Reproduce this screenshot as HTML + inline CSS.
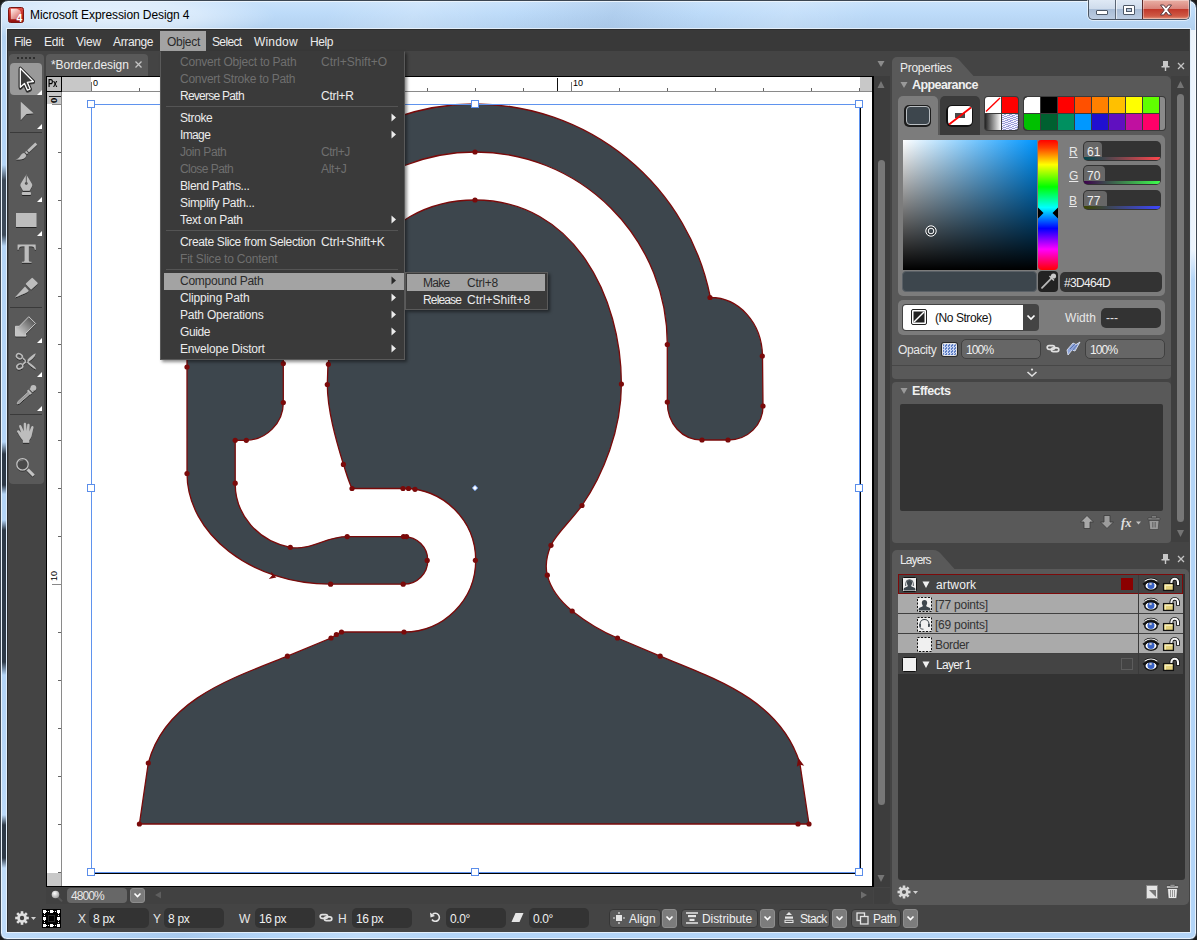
<!DOCTYPE html>
<html><head><meta charset="utf-8">
<style>
*{box-sizing:border-box;margin:0;padding:0}
html,body{width:1197px;height:940px;overflow:hidden;background:#1c1c1c}
body{font-family:"Liberation Sans",sans-serif;font-size:12px;color:#e6e6e6;position:relative}
.a{position:absolute}
.t{position:absolute;white-space:pre;line-height:14px}
#frame{left:0;top:0;width:1197px;height:940px;border-radius:8px 8px 7px 7px;background:radial-gradient(ellipse 170px 26px at 105px 15px,rgba(255,255,255,.62) 0,rgba(255,255,255,.42) 55%,rgba(255,255,255,0) 100%),linear-gradient(115deg,rgba(255,255,255,0) 300px,rgba(255,255,255,.18) 380px,rgba(255,255,255,0) 470px,rgba(120,150,190,.18) 560px,rgba(255,255,255,0) 640px,rgba(255,255,255,.15) 720px,rgba(255,255,255,0) 800px),linear-gradient(180deg,#c9e2fb 0,#bddbf9 12px,#b3d1ef 29px,#b5d5f6 60px,#b3d5f8 100%);border:1px solid #3c4652;box-shadow:inset 0 0 0 1px #eaf3fc}
#client{left:7px;top:29px;width:1183px;height:903px;background:#444444;border:1px solid #2c2c2c;border-right-color:#444;border-bottom-color:#444;box-shadow:0 0 0 1px rgba(255,255,255,.6)}
#menubar{left:8px;top:30px;width:1181px;height:21px;background:#393939}
.mi{position:absolute;top:35px;line-height:14px;color:#ececec}
</style></head><body>
<div class="a" id="frame"></div>
<div class="a" style="left:2px;top:30px;width:4px;height:900px;background:linear-gradient(180deg,rgba(40,50,62,0) 135px,rgba(40,50,62,.85) 150px,rgba(40,50,62,.85) 205px,rgba(40,50,62,0) 216px,rgba(40,50,62,0) 412px,rgba(30,40,52,.9) 424px,rgba(30,40,52,.9) 455px,rgba(40,50,62,0) 464px,rgba(40,50,62,0) 490px,rgba(30,40,52,.9) 500px,rgba(30,40,52,.9) 632px,rgba(40,50,62,0) 645px,rgba(40,50,62,0) 785px,rgba(30,40,52,.9) 795px,rgba(30,40,52,.9) 828px,rgba(40,50,62,0) 838px)"></div>
<div class="a" style="left:1191px;top:30px;width:5px;height:250px;background:linear-gradient(180deg,rgba(255,255,255,.75) 0,rgba(255,255,255,.75) 220px,rgba(255,255,255,0) 250px)"></div>
<div class="a" id="client"></div>
<div class="a" id="menubar"></div>

<!-- title -->
<svg class="a" style="left:8px;top:7px" width="16" height="16" viewBox="0 0 16 16">
<defs><linearGradient id="ig" x1="0" y1="0" x2="0" y2="1"><stop offset="0" stop-color="#e0544a"/><stop offset="0.45" stop-color="#c42a22"/><stop offset="1" stop-color="#8f0f0c"/></linearGradient></defs>
<rect x="0.5" y="0.5" width="15" height="15" rx="2" fill="url(#ig)" stroke="#7a1512"/>
<defs><linearGradient id="dg" x1="0" y1="0" x2="1" y2="1"><stop offset="0" stop-color="#fff" stop-opacity=".95"/><stop offset="1" stop-color="#f6b0a8" stop-opacity=".45"/></linearGradient></defs>
<path d="M2.800 1.800h4.700c3.600 0 5.700 2.300 5.700 5.200s-2.100 5.200-5.700 5.200h-4.700z" fill="url(#dg)"/>
<text x="8.600" y="15.300" font-family="Liberation Sans" font-weight="bold" font-size="10.500" fill="#fff">4</text>
</svg>
<div class="t" style="left:30px;top:7px;font-size:12px;color:#000;line-height:16px;letter-spacing:-0.09px">Microsoft Expression Design 4</div>
<!-- window buttons -->
<div class="a" style="left:1088px;top:0;width:102px;height:20px;border:1px solid #4a5563;border-top:none;border-radius:0 0 5px 5px;background:linear-gradient(180deg,#dfe9f5 0,#cfdcec 45%,#a9bdd6 50%,#bccde2 100%);box-shadow:0 0 0 1px rgba(255,255,255,.55)"></div>
<div class="a" style="left:1115px;top:0;width:1px;height:19px;background:#5a6675"></div>
<div class="a" style="left:1116px;top:0;width:1px;height:19px;background:rgba(255,255,255,.6)"></div>
<div class="a" style="left:1142px;top:0;width:47px;height:19px;border-radius:0 0 4px 0;background:linear-gradient(180deg,#e9b0a5 0,#d9837a 45%,#c1392b 50%,#cf5a45 85%,#e39880 100%);border-left:1px solid #5a2a2a;box-shadow:inset 0 0 0 1px rgba(255,255,255,.35)"></div>
<div class="a" style="left:1096px;top:10px;width:12px;height:5px;background:#fff;border:1px solid #4d5866;border-radius:1px"></div>
<div class="a" style="left:1123px;top:5px;width:12px;height:10px;background:#fff;border:1px solid #4d5866;border-radius:1px"></div>
<div class="a" style="left:1126px;top:8px;width:6px;height:4px;background:#b9c9dd;border:1px solid #4d5866"></div>
<svg class="a" style="left:1159px;top:4px" width="14" height="12" viewBox="0 0 14 12"><path d="M1.500 1h3.200l2.300 2.800 2.300-2.800h3.200l-3.800 5 3.800 5h-3.200l-2.300-2.900-2.300 2.900h-3.200l3.800-5z" fill="#fff" stroke="#5a3a40" stroke-width="1"/></svg>

<div class="a" style="left:160px;top:31px;width:46px;height:20px;background:#a3a3a3"></div>
<div class="mi" style="left:14px;color:#ececec;letter-spacing:-0.46px">File</div>
<div class="mi" style="left:44px;color:#ececec;letter-spacing:-0.17px">Edit</div>
<div class="mi" style="left:76px;color:#ececec;letter-spacing:-0.20px">View</div>
<div class="mi" style="left:113px;color:#ececec;letter-spacing:-0.37px">Arrange</div>
<div class="mi" style="left:167px;color:#2a2a2a;letter-spacing:-0.28px">Object</div>
<div class="mi" style="left:212px;color:#ececec;letter-spacing:-0.63px">Select</div>
<div class="mi" style="left:254px;color:#ececec;letter-spacing:0.19px">Window</div>
<div class="mi" style="left:310px;color:#ececec;letter-spacing:-0.42px">Help</div>


<!-- toolbox -->
<div class="a" style="left:9px;top:54px;width:35px;height:430px;background:#595959;border-radius:4px"></div>
<div class="a" style="left:17px;top:57px;width:18px;height:2px;background:repeating-linear-gradient(90deg,#2e2e2e 0,#2e2e2e 2px,transparent 2px,transparent 4px)"></div>
<div class="a" style="left:10px;top:63px;width:32px;height:32px;background:#999999;border-radius:4px"></div>
<div class="a" style="left:10px;top:132px;width:32px;height:1px;background:#3a3a3a"></div>
<div class="a" style="left:10px;top:307px;width:32px;height:1px;background:#3a3a3a"></div>
<div class="a" style="left:10px;top:414px;width:32px;height:1px;background:#3a3a3a"></div>
<svg class="a" style="left:9px;top:54px" width="35" height="430" viewBox="9 54 35 430">
<defs>
<filter id="ds" x="-20%" y="-20%" width="150%" height="150%"><feDropShadow dx="0" dy="1" stdDeviation="0.600" flood-color="#000" flood-opacity=".6"/></filter>
<linearGradient id="bk" x1="1" y1="0" x2="0" y2="1"><stop offset="0" stop-color="#3c3c3c"/><stop offset="0.800" stop-color="#c4c4c4"/></linearGradient>
</defs>
<g fill="#fff"><path d="M42 90v5h-5z"/><path d="M42 124v5h-5z"/><path d="M42 197v5h-5z"/><path d="M42 231v5h-5z"/><path d="M42 338v5h-5z"/><path d="M42 372v5h-5z"/><path d="M42 406v5h-5z"/></g>
<!-- select arrow -->
<g filter="url(#ds)"><path id="sa" d="M20.300 68.300v19l4.200-3.900 2.900 6.800 2.800-1.200-2.900-6.700 6.100-0.800z" fill="none" stroke="#1e1e1e" stroke-width="3.200" stroke-linejoin="round"/><path d="M20.300 68.300v19l4.200-3.900 2.900 6.800 2.800-1.200-2.900-6.700 6.100-0.800z" fill="#3a3a3a" stroke="#fff" stroke-width="1.300" stroke-linejoin="round"/></g>
<!-- direct select -->
<path d="M20.800 101.800v18.200l5.500-6 7.200-0.700z" fill="#bdbdbd" filter="url(#ds)"/>
<g fill="#bdbdbd" filter="url(#ds)">
<!-- brush -->
<path d="M35.300 142.600l1.900 2-8.200 7.600-1.900-2z"/><path d="M26.300 150.900l1.900 2-1.300 1.200-1.900-2z"/><path d="M24.300 153l1.800 2c0.300 3.300-4.500 5-10.600 4.500 2.500-0.700 3.700-1.700 4.600-3.300 1-1.900 2.300-3.100 4.200-3.200z"/>
<!-- pen -->
<path d="M26.300 174.500l5.600 9.300c0.500 0.900 0.500 1.700 0 2.600l-2.400 4.300h-6.400l-2.400-4.300c-0.500-0.900-0.500-1.700 0-2.600zM25.800 175.300h1v6.600a1.500 1.500 0 1 1-1 0z" fill-rule="evenodd"/><rect x="21.800" y="192" width="9.200" height="3" rx="1.300"/>
<!-- rectangle -->
<rect x="16" y="213" width="20.500" height="14"/>
<!-- T -->
<path d="M17.600 244.500h18l0.200 5.300h-0.900c-0.500-2.600-1.400-3.500-3.600-3.500h-2.500v13.600c0 1.500 0.500 1.800 2.700 1.900v0.900h-9.600v-0.900c2.200-0.100 2.700-0.400 2.700-1.900v-13.600h-2.500c-2.200 0-3.100 0.900-3.600 3.500h-0.900z"/>
<!-- knife -->
<path d="M31.500 278.200a1 1 0 0 1 1.400 0l4.500 4.300a1 1 0 0 1 0 1.400l-5.600 5.200a1 1 0 0 1-1.400 0l-4.300-4.500a1 1 0 0 1 0-1.400z"/><path d="M25 286.600l3.800 4.100-1.300 1.300c-3.800 2-8.200 3.700-12.700 5.500z"/>
<!-- scissors -->
<path d="M26.600 360.900c3-3.600 6-6.300 9-7.600 0 2.500-3 6-7.300 8.600 4.300 2.600 7.500 5.200 7.900 7.600-3.500-1.300-6.600-3.900-9.600-7.500l-3.400 3-1-1 2.900-3-2.900-2.600 1-1.100z"/>
<!-- hand -->
<path d="M22.900 442.800l0-2.500c-1.800-2-3.500-4.700-4.200-6-0.600-1-0.800-1.500-1.400-2.200-0.900-1 0.400-2.500 1.700-1.600l2.200 2-2-5.800c-0.500-1.500 1.400-2.300 2.100-0.900l2.500 5.500-0.100-7.200c0-1.600 2.300-1.700 2.400-0.100l0.500 7 0.700-6.300c0.200-1.500 2.400-1.300 2.300 0.200l-0.200 6.600 1.900-4.700c0.600-1.400 2.500-0.700 2.200 0.700-0.700 3.200-1.200 5.300-1.700 7.500-0.400 1.900-1.400 3.700-2.600 5.300l0 2.500z"/>
</g>
<!-- scissors rings -->
<g fill="none" stroke="#bdbdbd" stroke-width="1.400" filter="url(#ds)"><ellipse cx="19.400" cy="356.200" rx="3.100" ry="2.400" transform="rotate(25 19.400 356.200)"/><ellipse cx="19.800" cy="366.300" rx="3.100" ry="2.400" transform="rotate(-25 19.800 366.300)"/></g>
<circle cx="26.700" cy="361" r="0.900" fill="#444"/>
<!-- bucket arrow -->
<path d="M15.500 326.300h3.800l9.500-9.600 6.800 6.800-10.400 10.400 0.800 2h-10.500z" fill="url(#bk)" stroke="#c9c9c9" stroke-width="1" stroke-linejoin="round" filter="url(#ds)"/>
<!-- eyedropper -->
<g filter="url(#ds)" fill="#bdbdbd"><circle cx="33.400" cy="387.800" r="2.900"/><path d="M30.500 388l3.200 3.200-1 1-3.200-3.200z"/><path d="M28.300 389.600l3.600 3.600-1.300 1.300-3.600-3.600z"/><path d="M28.300 392l1.700 1.700-10.500 9.300-2.300 0.800 0.800-2.300z" fill="#9a9a9a" stroke="#bdbdbd" stroke-width="0.800"/></g>
<!-- zoom -->
<g filter="url(#ds)"><circle cx="22.500" cy="464.300" r="5.700" fill="#484848" stroke="#c4c4c4" stroke-width="1.200"/><path d="M19.300 461.300c1.400-1 2.600-1.300 4-1.300" fill="none" stroke="#8a8a8a" stroke-width="0.900"/><path d="M27.700 469.500l6 6" stroke="#c4c4c4" stroke-width="3" stroke-linecap="butt"/></g>
</svg>


<!-- doc tab -->
<div class="a" style="left:46px;top:54px;width:102px;height:22px;background:#595959;border-radius:4px 4px 0 0"></div>
<div class="t" style="left:51px;top:58px;color:#ececec;letter-spacing:-0.07px">*Border.design</div>
<svg class="a" style="left:134px;top:60px" width="9" height="9" viewBox="0 0 9 9"><path d="M1.500 1.500l6 6M7.500 1.500l-6 6" stroke="#c4c4c4" stroke-width="1.300"/></svg>
<!-- scroll gutters -->
<div class="a" style="left:874px;top:76px;width:16px;height:811px;background:#3d3d3d"></div>
<div class="a" style="left:46px;top:887px;width:827px;height:17px;background:#414141"></div>
<div class="a" style="left:874px;top:888px;width:16px;height:16px;background:#3f3f3f;border-radius:0 0 4px 0"></div>
<div class="a" style="left:878px;top:160px;width:7px;height:645px;background:#777777;border-radius:4px"></div>
<svg class="a" style="left:874px;top:56px" width="16" height="850" viewBox="874 56 16 850">
<path d="M877.500 61h7l-3.500 6z" fill="#8c8c8c"/><path d="M877.500 88h7l-3.500-7z" fill="#757575"/><path d="M877.500 875h7l-3.500 7z" fill="#757575"/>
</svg>
<svg class="a" style="left:150px;top:888px" width="720" height="16" viewBox="150 888 720 16"><path d="M161 891.500v7l-6-3.500z" fill="#5e5e5e"/><path d="M861 891.500v7l6-3.500z" fill="#6e6e6e"/></svg>
<!-- doc frame -->
<div class="a" style="left:46px;top:76px;width:828px;height:811px;background:#000"></div>
<div class="a" style="left:47px;top:77px;width:825px;height:809px;background:#fff"></div>
<!-- rulers -->
<div class="a" style="left:47px;top:77px;width:825px;height:15px;background:#fff;border-bottom:1px solid #8a8a8a"></div>
<div class="a" style="left:47px;top:77px;width:15px;height:809px;background:#fff;border-right:1px solid #8a8a8a"></div>
<div class="a" style="left:62px;top:77px;width:29px;height:14px;background:#c8c8c8"></div>
<div class="a" style="left:860px;top:77px;width:12px;height:14px;background:#c8c8c8"></div>
<div class="a" style="left:47px;top:92px;width:14px;height:12px;background:#c8c8c8"></div>
<div class="a" style="left:47px;top:873px;width:14px;height:13px;background:#c8c8c8"></div>
<div class="a" style="left:47px;top:77px;width:15px;height:15px;background:#bcbcbc;border-right:1px solid #000;border-bottom:1px solid #000"></div>
<div class="t" style="left:48px;top:78px;font-size:10px;font-weight:bold;color:#000;line-height:12px;letter-spacing:-0.3px;transform:scaleX(.78);transform-origin:0 0">Px</div>
<svg class="a" style="left:47px;top:77px" width="825" height="809" viewBox="47 77 825 809" shape-rendering="crispEdges">
<g stroke-width="1">
<path d="M91.500 82v9M571.500 82v9" stroke="#777"/><path d="M557.500 78v13" stroke="#111"/>
<path d="M139.500 88v3M187.500 88v3M235.500 88v3M283.500 88v3M331.500 88v3M379.500 88v3M427.500 88v3M475.500 88v3M523.500 88v3M619.500 88v3M667.500 88v3M715.500 88v3M763.500 88v3M811.500 88v3M859.500 88v3" stroke="#666"/>
<path d="M49 96.500h12" stroke="#222"/><path d="M52 104.500h9M52 584.500h9" stroke="#888"/>
<path d="M58 152.500h3M58 200.500h3M58 248.500h3M58 296.500h3M58 344.500h3M58 392.500h3M58 440.500h3M58 488.500h3M58 536.500h3M58 632.500h3M58 680.500h3M58 728.500h3M58 776.500h3M58 824.500h3M58 872.500h3" stroke="#666"/>
</g></svg>
<div class="t" style="left:93px;top:78px;font-size:9px;color:#000;line-height:11px">0</div>
<div class="t" style="left:573px;top:78px;font-size:9px;color:#000;line-height:11px">10</div>
<div class="t" style="left:48px;top:103px;font-size:9.500px;font-weight:bold;color:#000;line-height:11px;transform:rotate(-90deg);transform-origin:0 0">0</div>
<div class="t" style="left:49px;top:581px;font-size:9px;color:#000;line-height:11px;transform:rotate(-90deg);transform-origin:0 0">10</div>
<!-- zoom field -->
<svg class="a" style="left:50px;top:889px" width="14" height="14" viewBox="0 0 14 14"><defs><radialGradient id="zg" cx=".4" cy=".35" r=".7"><stop offset="0" stop-color="#fff"/><stop offset="1" stop-color="#9a9a9a"/></radialGradient></defs><path d="M7.500 8l4 3.800" stroke="#555" stroke-width="2" stroke-linecap="round"/><circle cx="5.500" cy="5.500" r="3.800" fill="url(#zg)"/></svg>
<div class="a" style="left:67px;top:888px;width:60px;height:15px;background:#676767;border-radius:4px"></div>
<div class="t" style="left:71px;top:889px;color:#e8e8e8;line-height:14px;letter-spacing:-0.90px">4800%</div>
<div class="a" style="left:130px;top:888px;width:15px;height:15px;background:#7a7a7a;border-radius:3px;border:1px solid #8d8d8d"></div>
<svg class="a" style="left:133px;top:892px" width="9" height="7" viewBox="0 0 9 7"><path d="M1.500 1.500l3 3 3-3" fill="none" stroke="#fff" stroke-width="1.600"/></svg>


<!-- artwork -->
<svg class="a" style="left:62px;top:92px" width="810" height="794" viewBox="62 92 810 794">
<g fill="#3d464d" stroke="#7a0a0a" stroke-width="1.300">
<path d="M475,104 A240,240 0 0 1 710.400,297.500 C739,297.500 762,323 762.500,356 L763,406 C763,425 748,440 728,440 L702,440 C682,440 667.300,424 667.300,402 L667.300,344 A192,192 0 0 0 283.300,344 L283.300,403 C283.300,423 266,440.300 246,440.300 L235.200,440.300 L235.200,483.500 C235.200,515 258,541 290.300,547.300 C311,551 325,536.600 347.200,536.600 L404,536.600 A23.800,23.800 0 0 1 404,584.200 L331,584.200 C251,584.200 187,534 187,473 L187,356 C187.500,323 211,297.500 239.600,297.500 A240,240 0 0 1 475,104 Z"/>
<path d="M475,200 C574,200 621.400,297 621.400,384 C621.400,430 603,475 582,505.500 C570,522 556,534 551,545.300 C546.500,556 545,566 547.300,575.200 C551,590 560,601 572.200,611 C585,621 600,631 617.500,638 L660.200,656.200 C716,679 780,700 799.800,763 L809,824 L139.400,824 L148.300,763 C165,700 230,679 287.400,656.200 L331,638 L336.400,634.500 L341.500,632 L404,632 A71.700,71.700 0 0 0 404,488.500 L352,488.500 C348,480 346,472 343.400,464.400 C336,440 327.300,410 327.300,384 C327.300,297 376,200 475,200 Z"/>
</g>
<g fill="#7a0a0a"><circle cx="475" cy="200" r="2.600"/><circle cx="621.4" cy="384" r="2.600"/><circle cx="582" cy="505.5" r="2.600"/><circle cx="551" cy="545.3" r="2.600"/><circle cx="547.3" cy="575.2" r="2.600"/><circle cx="572.2" cy="611" r="2.600"/><circle cx="617.5" cy="638" r="2.600"/><circle cx="660.2" cy="656.2" r="2.600"/><circle cx="809" cy="824" r="2.600"/><circle cx="798" cy="824" r="2.600"/><circle cx="139.4" cy="824" r="2.600"/><circle cx="148.3" cy="763" r="2.600"/><circle cx="287.4" cy="656.2" r="2.600"/><circle cx="331" cy="638" r="2.600"/><circle cx="336.4" cy="634.5" r="2.600"/><circle cx="341.5" cy="632" r="2.600"/><circle cx="404" cy="632" r="2.600"/><circle cx="475.4" cy="560.3" r="2.600"/><circle cx="415" cy="489.3" r="2.600"/><circle cx="408.5" cy="488.5" r="2.600"/><circle cx="403" cy="488.5" r="2.600"/><circle cx="352" cy="488.5" r="2.600"/><circle cx="343.4" cy="464.4" r="2.600"/><circle cx="327.3" cy="384.5" r="2.600"/><circle cx="328.4" cy="364.3" r="2.600"/><circle cx="475" cy="152" r="2.600"/><circle cx="710" cy="297.5" r="2.600"/><circle cx="762.3" cy="356" r="2.600"/><circle cx="763" cy="406" r="2.600"/><circle cx="728" cy="440" r="2.600"/><circle cx="702" cy="440" r="2.600"/><circle cx="667.3" cy="402" r="2.600"/><circle cx="667.3" cy="344.5" r="2.600"/><circle cx="187" cy="367" r="2.600"/><circle cx="283.3" cy="363.5" r="2.600"/><circle cx="283.3" cy="402.5" r="2.600"/><circle cx="246.3" cy="440.3" r="2.600"/><circle cx="235.2" cy="440.3" r="2.600"/><circle cx="235.2" cy="483.2" r="2.600"/><circle cx="187" cy="473.5" r="2.600"/><circle cx="290.3" cy="547.3" r="2.600"/><circle cx="347.2" cy="536.6" r="2.600"/><circle cx="403.5" cy="536.6" r="2.600"/><circle cx="406.5" cy="536.6" r="2.600"/><circle cx="427.2" cy="560.4" r="2.600"/><circle cx="403.2" cy="584.2" r="2.600"/><circle cx="330.6" cy="584.2" r="2.600"/><path d="M276.300 577.500L271 571.600L272 575.600L268.800 579Z"/><path d="M798.200 757.800L804.200 765.800L800 764.800L796.800 766.800Z"/></g>
<!-- artboard edge + bbox -->
<path d="M860.500 108v765.500M95 873.500h766" stroke="#000" stroke-width="1" fill="none" shape-rendering="crispEdges"/>
<rect x="91.500" y="104.500" width="768" height="768" fill="none" stroke="#5f93ee" stroke-width="1" shape-rendering="crispEdges"/>
<g fill="#fff" stroke="#5b8eea" stroke-width="1" shape-rendering="crispEdges">
<rect x="87.5" y="100.5" width="7" height="7"/><rect x="471.5" y="100.5" width="7" height="7"/><rect x="855.5" y="100.5" width="7" height="7"/>
<rect x="87.5" y="484.5" width="7" height="7"/><rect x="855.5" y="484.5" width="7" height="7"/>
<rect x="87.5" y="868.5" width="7" height="7"/><rect x="471.5" y="868.5" width="7" height="7"/><rect x="855.5" y="868.5" width="7" height="7"/>
</g>
<path d="M475 485.300l2.700 2.700-2.700 2.700-2.700-2.700z" fill="#fff" stroke="#6a9af0" stroke-width="0.900"/>
</svg>


<!-- properties panel -->
<svg class="a" style="left:892px;top:57px" width="90" height="20" viewBox="0 0 90 20"><path d="M0 20V5a5 5 0 0 1 5-5h55c4 0 6 1.500 8.500 4.500l13 14.500z" fill="#595959"/></svg>
<div class="a" style="left:892px;top:76px;width:279px;height:303px;background:#595959;border-radius:0 5px 4px 4px"></div>
<div class="t" style="left:900px;top:61px;color:#ececec;letter-spacing:-0.31px">Properties</div>
<svg class="a" style="left:1159px;top:59px" width="30" height="14" viewBox="1159 59 30 14"><path d="M1163 61h5v5h1.500v1.500h-3.300v3.500h-1.400v-3.500h-3.300v-1.500h1.500z" fill="#c8c8c8"/><path d="M1178 63l6 6M1184 63l-6 6" stroke="#c4c4c4" stroke-width="1.300"/></svg>
<div class="a" style="left:1171px;top:76px;width:18px;height:466px;background:#3f3f3f"></div>
<div class="a" style="left:1177px;top:94px;width:7px;height:428px;background:#777777;border-radius:4px"></div>
<svg class="a" style="left:1171px;top:76px" width="18" height="470" viewBox="1171 76 18 470"><path d="M1177 88h7l-3.500-7z" fill="#757575"/><path d="M1177 530h7l-3.500 7z" fill="#757575"/></svg>
<svg class="a" style="left:899px;top:80px" width="10" height="10" viewBox="0 0 10 10"><path d="M1.500 2h7l-3.500 6z" fill="#9a9a9a"/></svg>
<div class="t" style="left:912px;top:78px;color:#f0f0f0;font-weight:bold;font-size:12.500px;letter-spacing:-0.58px">Appearance</div>
<!-- fill/stroke tabs -->
<div class="a" style="left:898px;top:96px;width:40px;height:40px;background:#7c7c7c;border-radius:5px 5px 0 0"></div>
<div class="a" style="left:940px;top:96px;width:40px;height:39px;background:#3b3b3b;border-radius:5px 5px 0 0"></div>
<div class="a" style="left:904px;top:105px;width:27px;height:22px;background:#1c1c1c;border-radius:5px"></div>
<div class="a" style="left:906px;top:106px;width:24px;height:19px;background:#3d464d;border:1.500px solid #b9bec2;border-radius:4px"></div>
<div class="a" style="left:946px;top:105px;width:27px;height:22px;background:#111;border-radius:6px"></div>
<div class="a" style="left:948px;top:106px;width:24px;height:19px;background:#fff;border-radius:4px"></div>
<div class="a" style="left:955px;top:113px;width:10px;height:5px;background:#4a4a4a"></div>
<svg class="a" style="left:947px;top:105px" width="26" height="22" viewBox="0 0 26 22"><path d="M2 19.500L24 2.500" stroke="#ff0000" stroke-width="1.800"/></svg>
<!-- mini swatches -->
<div class="a" style="left:984px;top:96px;width:35px;height:35px;background:#3a3a3a;border-radius:4px"></div>
<div class="a" style="left:985px;top:97px;width:16px;height:16px;background:#fff;border-radius:3px 0 0 0"></div>
<div class="a" style="left:1002px;top:97px;width:16px;height:16px;background:#ff0000;border-radius:0 3px 0 0"></div>
<div class="a" style="left:985px;top:114px;width:16px;height:16px;background:linear-gradient(90deg,#222,#fff);border-radius:0 0 0 3px"></div>
<div class="a" style="left:1002px;top:114px;width:16px;height:16px;background:repeating-linear-gradient(160deg,#f4f4ff 0,#f4f4ff 1px,#9a9ad8 1px,#9a9ad8 2px);border-radius:0 0 3px 0"></div>
<svg class="a" style="left:985px;top:97px" width="16" height="16" viewBox="0 0 16 16"><path d="M1 14.500L15 1" stroke="#ff0000" stroke-width="1.400"/></svg>
<!-- swatch strip -->
<div class="a" style="left:1023px;top:96px;width:143px;height:35px;background:#3a3a3a;border-radius:4px"></div>
<div class="a" style="left:1024px;top:97px;width:16px;height:16px;background:#ffffff"></div><div class="a" style="left:1041px;top:97px;width:16px;height:16px;background:#000000"></div><div class="a" style="left:1058px;top:97px;width:16px;height:16px;background:#ff0000"></div><div class="a" style="left:1075px;top:97px;width:16px;height:16px;background:#ff5000"></div><div class="a" style="left:1092px;top:97px;width:16px;height:16px;background:#ff8000"></div><div class="a" style="left:1109px;top:97px;width:16px;height:16px;background:#ffc000"></div><div class="a" style="left:1126px;top:97px;width:16px;height:16px;background:#ffff00"></div><div class="a" style="left:1143px;top:97px;width:16px;height:16px;background:#60ff00"></div><div class="a" style="left:1024px;top:114px;width:16px;height:16px;background:#00c000"></div><div class="a" style="left:1041px;top:114px;width:16px;height:16px;background:#006030"></div><div class="a" style="left:1058px;top:114px;width:16px;height:16px;background:#009060"></div><div class="a" style="left:1075px;top:114px;width:16px;height:16px;background:#0098ff"></div><div class="a" style="left:1092px;top:114px;width:16px;height:16px;background:#2010d0"></div><div class="a" style="left:1109px;top:114px;width:16px;height:16px;background:#6010c0"></div><div class="a" style="left:1126px;top:114px;width:16px;height:16px;background:#c010a0"></div><div class="a" style="left:1143px;top:114px;width:16px;height:16px;background:#ff0068"></div>
<div class="a" style="left:1024px;top:97px;width:4px;height:4px;background:radial-gradient(circle at 4px 4px,transparent 3.500px,#3a3a3a 4px)"></div>
<div class="a" style="left:1024px;top:126px;width:4px;height:4px;background:radial-gradient(circle at 4px 0,transparent 3.500px,#3a3a3a 4px)"></div>
<div class="a" style="left:1160px;top:97px;width:5px;height:33px;background:#8a8a8a;border-radius:0 3px 3px 0"></div>
<!-- colour editor -->
<div class="a" style="left:898px;top:135px;width:267px;height:161px;background:#7c7c7c;border-radius:0 5px 5px 5px"></div>
<div class="a" style="left:903px;top:140px;width:134px;height:130px;background:linear-gradient(180deg,rgba(0,0,0,0) 0,#000 100%),linear-gradient(90deg,#fff 0,#0096ff 100%)"></div>
<div class="a" style="left:1038px;top:140px;width:20px;height:130px;border-radius:3px 3px 4px 4px;background:linear-gradient(180deg,#ff0000 0,#ff4000 6%,#ffff00 19%,#00ff00 36%,#00ffff 52%,#0000ff 68%,#ff00ff 84%,#ff0000 100%)"></div>
<svg class="a" style="left:1038px;top:205px" width="20" height="16" viewBox="0 0 20 16"><path d="M0 2.500l5.500 5.500-5.500 5.500zM20 2.500l-5.500 5.500 5.500 5.500z" fill="#000"/></svg>
<svg class="a" style="left:924px;top:224px" width="14" height="14" viewBox="0 0 14 14"><circle cx="7" cy="7" r="5.200" fill="none" stroke="#fff" stroke-width="1"/><circle cx="7" cy="7" r="2.800" fill="none" stroke="#fff" stroke-width="1"/><circle cx="7" cy="7" r="4" fill="none" stroke="#222" stroke-width="0.700" opacity=".7"/></svg>
<div class="a" style="left:902px;top:271px;width:135px;height:21px;background:#3d464d;border-radius:4px;border:1px solid #5a6066"></div>
<div class="a" style="left:1038px;top:271px;width:20px;height:21px;background:#222222;border-radius:4px"></div>
<svg class="a" style="left:1038px;top:271px" width="21" height="21" viewBox="0 0 21 21"><circle cx="15.500" cy="5" r="2.600" fill="#c8c8c8"/><path d="M13.800 6.800L4 16.800" stroke="#b8b8b8" stroke-width="1.800" stroke-linecap="round"/><path d="M11.500 5l4.500 4.500" stroke="#c8c8c8" stroke-width="1.400"/></svg>
<div class="a" style="left:1060px;top:272px;width:102px;height:20px;background:#333333;border-radius:5px"></div>
<div class="t" style="left:1064px;top:276px;color:#f0f0f0;letter-spacing:-0.67px">#3D464D</div>
<div class="t" style="left:1069px;top:145px;color:#e8e8e8;text-decoration:underline">R</div>
<div class="a" style="left:1083px;top:141px;width:78px;height:20px;background:#333333;border-radius:5px;overflow:hidden"><div class="a" style="left:1px;top:1px;width:18px;height:15px;background:#676767;border-radius:4px 4px 0 0"></div><div class="a" style="left:1px;top:16px;width:76px;height:3px;background:linear-gradient(90deg,#00464d,#ff464d);border-radius:0 0 4px 4px"></div></div>
<div class="t" style="left:1087px;top:145px;color:#f0f0f0">61</div>
 <div class="t" style="left:1069px;top:169px;color:#e8e8e8;text-decoration:underline">G</div>
<div class="a" style="left:1083px;top:165px;width:78px;height:20px;background:#333333;border-radius:5px;overflow:hidden"><div class="a" style="left:1px;top:1px;width:21px;height:15px;background:#676767;border-radius:4px 4px 0 0"></div><div class="a" style="left:1px;top:16px;width:76px;height:3px;background:linear-gradient(90deg,#3d004d,#3dff4d);border-radius:0 0 4px 4px"></div></div>
<div class="t" style="left:1087px;top:169px;color:#f0f0f0">70</div>
 <div class="t" style="left:1069px;top:194px;color:#e8e8e8;text-decoration:underline">B</div>
<div class="a" style="left:1083px;top:190px;width:78px;height:20px;background:#333333;border-radius:5px;overflow:hidden"><div class="a" style="left:1px;top:1px;width:23px;height:15px;background:#676767;border-radius:4px 4px 0 0"></div><div class="a" style="left:1px;top:16px;width:76px;height:3px;background:linear-gradient(90deg,#3d4600,#3d46ff);border-radius:0 0 4px 4px"></div></div>
<div class="t" style="left:1087px;top:194px;color:#f0f0f0">77</div>

<!-- stroke row -->
<div class="a" style="left:898px;top:300px;width:267px;height:35px;background:#7c7c7c;border-radius:5px"></div>
<div class="a" style="left:902px;top:304px;width:137px;height:27px;background:#444;border-radius:4px"></div>
<div class="a" style="left:903px;top:305px;width:120px;height:25px;background:#fff;border-radius:3px 0 0 3px"></div>
<div class="a" style="left:911px;top:309px;width:16px;height:16px;background:#fff;border:1.500px solid #222;border-radius:2px"></div>
<svg class="a" style="left:911px;top:309px" width="16" height="16" viewBox="0 0 16 16"><rect x="2.500" y="2.500" width="11" height="11" fill="#222"/><path d="M3 13l10-10" stroke="#fff" stroke-width="1.500"/></svg>
<div class="t" style="left:935px;top:311px;color:#111;letter-spacing:-0.44px">(No Stroke)</div>
<svg class="a" style="left:1026px;top:314px" width="10" height="8" viewBox="0 0 10 8"><path d="M1.500 1.500l3.500 3.500 3.500-3.500" fill="none" stroke="#fff" stroke-width="1.700"/></svg>
<div class="t" style="left:1065px;top:311px;color:#e8e8e8;letter-spacing:0.06px">Width</div>
<div class="a" style="left:1101px;top:308px;width:60px;height:20px;background:#333333;border-radius:5px"></div>
<div class="t" style="left:1106px;top:311px;color:#e0e0e0">---</div>
<!-- opacity row -->
<div class="t" style="left:898px;top:343px;color:#e8e8e8;letter-spacing:-0.33px">Opacity</div>
<div class="a" style="left:941px;top:342px;width:17px;height:15px;background:#2a2a2a;border-radius:3px"></div><div class="a" style="left:942px;top:343px;width:15px;height:13px;background:#e4e4e4;border-radius:2px"></div>
<div class="a" style="left:943px;top:344px;width:13px;height:11px;border-radius:1px;background:conic-gradient(#c9d6f2 25%,#5f7fc6 0 50%,#c9d6f2 0 75%,#5f7fc6 0) 0 0/3px 3px"></div>
<div class="a" style="left:961px;top:339px;width:80px;height:20px;background:#666666;border:1px solid #404040;border-radius:5px"></div>
<div class="t" style="left:966px;top:343px;color:#f0f0f0;letter-spacing:-0.88px">100%</div>
<svg class="a" style="left:1046px;top:344px" width="14" height="10" viewBox="0 0 14 10"><g fill="none" stroke="#e0e0e0" stroke-width="1.700"><rect x="1.200" y="1.600" width="7.400" height="3.800" rx="1.900"/><rect x="5.400" y="3.800" width="7.400" height="3.800" rx="1.900"/></g></svg>
<svg class="a" style="left:1065px;top:341px" width="17" height="16" viewBox="0 0 17 16"><path d="M2 9l6-7 3 1.500 4-2.500-5 9-3-1-4 5z" fill="#8ea4d8" stroke="#e6ecfa" stroke-width="0.800"/><path d="M5 8l5-5M7 10l5-6" stroke="#4c66a8" stroke-width="0.800"/></svg>
<div class="a" style="left:1085px;top:339px;width:80px;height:20px;background:#666666;border:1px solid #404040;border-radius:5px"></div>
<div class="t" style="left:1090px;top:343px;color:#f0f0f0;letter-spacing:-0.88px">100%</div>
<div class="a" style="left:892px;top:365px;width:279px;height:1px;background:#474747"></div>
<svg class="a" style="left:1026px;top:368px" width="12" height="10" viewBox="0 0 12 10"><circle cx="6" cy="1.600" r="1.100" fill="#e0e0e0"/><path d="M1.500 4l4.500 4 4.500-4" fill="none" stroke="#e0e0e0" stroke-width="1.600"/></svg>
<!-- effects -->
<div class="a" style="left:892px;top:382px;width:279px;height:161px;background:#595959;border-radius:4px"></div>
<svg class="a" style="left:899px;top:386px" width="10" height="10" viewBox="0 0 10 10"><path d="M1.500 2h7l-3.500 6z" fill="#9a9a9a"/></svg>
<div class="t" style="left:912px;top:384px;color:#f0f0f0;font-weight:bold;font-size:12.500px;letter-spacing:-0.44px">Effects</div>
<div class="a" style="left:900px;top:404px;width:263px;height:107px;background:#333333;border-radius:2px"></div>
<svg class="a" style="left:1078px;top:514px" width="86" height="18" viewBox="1078 514 86 18">
<g stroke="#3a3a3a" stroke-width="0.800"><path d="M1087 515.500l6.500 6.500h-3.500v6.500h-6v-6.500h-3.500z" fill="#a8a8a8"/><path d="M1107 528.500l6.500-6.500h-3.500v-6.500h-6v6.500h-3.500z" fill="#9c9c9c"/></g>
<text x="1121" y="527" font-family="Liberation Serif" font-style="italic" font-weight="bold" font-size="12.500" fill="#e0e0e0">fx</text><path d="M1136 521.500h5l-2.500 3z" fill="#c0c0c0"/>
<path d="M1148 518h12v1.800h-12zM1151.500 516h5v2h-5zM1149 520.500h10l-0.800 9h-8.400z" fill="#9a9a9a" stroke="#3a3a3a" stroke-width="0.600"/><path d="M1152.500 522v5.500M1154 522v5.500M1155.500 522v5.500" stroke="#666" stroke-width="0.800"/>
</svg>


<!-- layers panel -->
<svg class="a" style="left:892px;top:550px" width="70" height="20" viewBox="0 0 70 20"><path d="M0 20V5a5 5 0 0 1 5-5h36c4 0 6 1.500 8.500 4.500l13 14.500z" fill="#595959"/></svg>
<div class="a" style="left:892px;top:569px;width:297px;height:336px;background:#595959;border-radius:0 5px 5px 5px"></div>
<div class="t" style="left:900px;top:553px;color:#ececec;letter-spacing:-0.90px">Layers</div>
<svg class="a" style="left:1159px;top:552px" width="30" height="14" viewBox="1159 59 30 14"><path d="M1163 61h5v5h1.500v1.500h-3.300v3.500h-1.400v-3.500h-3.300v-1.500h1.500z" fill="#c8c8c8"/><path d="M1178 63l6 6M1184 63l-6 6" stroke="#c4c4c4" stroke-width="1.300"/></svg>
<div class="a" style="left:898px;top:574px;width:287px;height:306px;background:#333333;border-radius:0 0 3px 3px"></div><div class="a" style="left:898px;top:574px;width:285px;height:20px;background:#444444;border:1px solid #7d0a0a"></div><div class="a" style="left:898px;top:594px;width:285px;height:20px;background:#aaaaaa;border-bottom:1px solid #404040"></div><div class="a" style="left:898px;top:614px;width:285px;height:20px;background:#aaaaaa;border-bottom:1px solid #404040"></div><div class="a" style="left:898px;top:634px;width:285px;height:20px;background:#aaaaaa;border-bottom:1px solid #404040"></div><div class="a" style="left:898px;top:654px;width:285px;height:20px;background:#444444"></div><div class="a" style="left:1138px;top:575px;width:1px;height:99px;background:#3a3a3a"></div><svg class="a" style="left:1142px;top:577px" width="18" height="15" viewBox="0 0 18 15"><path d="M2.600 4.200Q9 -0.200 15.400 4.200" fill="none" stroke="#111" stroke-width="2.600"/><path d="M2.600 4.200Q9 -0.200 15.400 4.200" fill="none" stroke="#f4f4f4" stroke-width="1.100"/><ellipse cx="9" cy="8.700" rx="6.200" ry="4.500" fill="#fff" stroke="#111" stroke-width="1.500"/><circle cx="9" cy="8.500" r="3.500" fill="#3a62c4"/><rect x="7.400" y="5.800" width="2.300" height="2.300" fill="#c4c8d0"/><path d="M1.200 7.500Q9 0.800 16.800 7.500" fill="none" stroke="#111" stroke-width="2.200"/></svg><svg class="a" style="left:1162px;top:576px" width="18" height="16" viewBox="0 0 18 16"><path d="M9.400 8V6.100a3.300 3.300 0 0 1 6.600 0V9.700" fill="none" stroke="#111" stroke-width="3.800"/><path d="M9.400 8V6.100a3.300 3.300 0 0 1 6.600 0V9.100" fill="none" stroke="#f6f6f6" stroke-width="2.100"/><rect x="1.600" y="7.600" width="9.800" height="6.800" fill="#e4d27e" stroke="#111" stroke-width="1.300"/><path d="M2.600 8.600h7.800v1.400h-6.400v3.400h-1.400z" fill="#f6eeb8"/></svg><svg class="a" style="left:1142px;top:597px" width="18" height="15" viewBox="0 0 18 15"><path d="M2.600 4.200Q9 -0.200 15.400 4.200" fill="none" stroke="#111" stroke-width="2.600"/><path d="M2.600 4.200Q9 -0.200 15.400 4.200" fill="none" stroke="#f4f4f4" stroke-width="1.100"/><ellipse cx="9" cy="8.700" rx="6.200" ry="4.500" fill="#fff" stroke="#111" stroke-width="1.500"/><circle cx="9" cy="8.500" r="3.500" fill="#3a62c4"/><rect x="7.400" y="5.800" width="2.300" height="2.300" fill="#c4c8d0"/><path d="M1.200 7.500Q9 0.800 16.800 7.500" fill="none" stroke="#111" stroke-width="2.200"/></svg><svg class="a" style="left:1162px;top:596px" width="18" height="16" viewBox="0 0 18 16"><path d="M9.400 8V6.100a3.300 3.300 0 0 1 6.600 0V9.700" fill="none" stroke="#111" stroke-width="3.800"/><path d="M9.400 8V6.100a3.300 3.300 0 0 1 6.600 0V9.100" fill="none" stroke="#f6f6f6" stroke-width="2.100"/><rect x="1.600" y="7.600" width="9.800" height="6.800" fill="#e4d27e" stroke="#111" stroke-width="1.300"/><path d="M2.600 8.600h7.800v1.400h-6.400v3.400h-1.400z" fill="#f6eeb8"/></svg><svg class="a" style="left:1142px;top:617px" width="18" height="15" viewBox="0 0 18 15"><path d="M2.600 4.200Q9 -0.200 15.400 4.200" fill="none" stroke="#111" stroke-width="2.600"/><path d="M2.600 4.200Q9 -0.200 15.400 4.200" fill="none" stroke="#f4f4f4" stroke-width="1.100"/><ellipse cx="9" cy="8.700" rx="6.200" ry="4.500" fill="#fff" stroke="#111" stroke-width="1.500"/><circle cx="9" cy="8.500" r="3.500" fill="#3a62c4"/><rect x="7.400" y="5.800" width="2.300" height="2.300" fill="#c4c8d0"/><path d="M1.200 7.500Q9 0.800 16.800 7.500" fill="none" stroke="#111" stroke-width="2.200"/></svg><svg class="a" style="left:1162px;top:616px" width="18" height="16" viewBox="0 0 18 16"><path d="M9.400 8V6.100a3.300 3.300 0 0 1 6.600 0V9.700" fill="none" stroke="#111" stroke-width="3.800"/><path d="M9.400 8V6.100a3.300 3.300 0 0 1 6.600 0V9.100" fill="none" stroke="#f6f6f6" stroke-width="2.100"/><rect x="1.600" y="7.600" width="9.800" height="6.800" fill="#e4d27e" stroke="#111" stroke-width="1.300"/><path d="M2.600 8.600h7.800v1.400h-6.400v3.400h-1.400z" fill="#f6eeb8"/></svg><svg class="a" style="left:1142px;top:637px" width="18" height="15" viewBox="0 0 18 15"><path d="M2.600 4.200Q9 -0.200 15.400 4.200" fill="none" stroke="#111" stroke-width="2.600"/><path d="M2.600 4.200Q9 -0.200 15.400 4.200" fill="none" stroke="#f4f4f4" stroke-width="1.100"/><ellipse cx="9" cy="8.700" rx="6.200" ry="4.500" fill="#fff" stroke="#111" stroke-width="1.500"/><circle cx="9" cy="8.500" r="3.500" fill="#3a62c4"/><rect x="7.400" y="5.800" width="2.300" height="2.300" fill="#c4c8d0"/><path d="M1.200 7.500Q9 0.800 16.800 7.500" fill="none" stroke="#111" stroke-width="2.200"/></svg><svg class="a" style="left:1162px;top:636px" width="18" height="16" viewBox="0 0 18 16"><path d="M9.400 8V6.100a3.300 3.300 0 0 1 6.600 0V9.700" fill="none" stroke="#111" stroke-width="3.800"/><path d="M9.400 8V6.100a3.300 3.300 0 0 1 6.600 0V9.100" fill="none" stroke="#f6f6f6" stroke-width="2.100"/><rect x="1.600" y="7.600" width="9.800" height="6.800" fill="#e4d27e" stroke="#111" stroke-width="1.300"/><path d="M2.600 8.600h7.800v1.400h-6.400v3.400h-1.400z" fill="#f6eeb8"/></svg><svg class="a" style="left:1142px;top:657px" width="18" height="15" viewBox="0 0 18 15"><path d="M2.600 4.200Q9 -0.200 15.400 4.200" fill="none" stroke="#111" stroke-width="2.600"/><path d="M2.600 4.200Q9 -0.200 15.400 4.200" fill="none" stroke="#f4f4f4" stroke-width="1.100"/><ellipse cx="9" cy="8.700" rx="6.200" ry="4.500" fill="#fff" stroke="#111" stroke-width="1.500"/><circle cx="9" cy="8.500" r="3.500" fill="#3a62c4"/><rect x="7.400" y="5.800" width="2.300" height="2.300" fill="#c4c8d0"/><path d="M1.200 7.500Q9 0.800 16.800 7.500" fill="none" stroke="#111" stroke-width="2.200"/></svg><svg class="a" style="left:1162px;top:656px" width="18" height="16" viewBox="0 0 18 16"><path d="M9.400 8V6.100a3.300 3.300 0 0 1 6.600 0V9.700" fill="none" stroke="#111" stroke-width="3.800"/><path d="M9.400 8V6.100a3.300 3.300 0 0 1 6.600 0V9.100" fill="none" stroke="#f6f6f6" stroke-width="2.100"/><rect x="1.600" y="7.600" width="9.800" height="6.800" fill="#e4d27e" stroke="#111" stroke-width="1.300"/><path d="M2.600 8.600h7.800v1.400h-6.400v3.400h-1.400z" fill="#f6eeb8"/></svg><svg class="a" style="left:902px;top:577px" width="15" height="15" viewBox="0 0 15 15"><rect x="0.500" y="0.500" width="14" height="14" rx="1" fill="#f0f0f0" stroke="#111"/><g transform="translate(0.500,0.500)"><path d="M7 2.500c1.700 0 2.700 1.300 2.700 3 0 1-0.400 1.800-1 2.400l0.300 1 3 1.300c0.600 0.300 0.800 0.800 0.900 1.500v1.300h-11.800v-1.300c0.100-0.700 0.300-1.200 0.900-1.500l3-1.300 0.300-1c-0.600-0.600-1-1.400-1-2.400 0-1.700 1-3 2.700-3z" fill="#3d464d"/><path d="M3.200 8.500v-2.500a3.800 3.800 0 0 1 7.600 0v2.500" fill="none" stroke="#3d464d" stroke-width="0.900"/></g></svg><svg class="a" style="left:917px;top:597px" width="15" height="15" viewBox="0 0 15 15"><rect x="0.500" y="0.500" width="14" height="14" fill="#f0f0f0" stroke="#111" stroke-dasharray="2 1.500"/><g transform="translate(0.500,0.500)"><path d="M7 2.500c1.700 0 2.700 1.300 2.700 3 0 1-0.400 1.800-1 2.400l0.300 1 3 1.300c0.600 0.300 0.800 0.800 0.900 1.500v1.300h-11.800v-1.300c0.100-0.700 0.300-1.200 0.900-1.500l3-1.300 0.300-1c-0.600-0.600-1-1.400-1-2.400 0-1.700 1-3 2.700-3z" fill="#3d464d"/></g></svg><svg class="a" style="left:917px;top:617px" width="15" height="15" viewBox="0 0 15 15"><rect x="0.500" y="0.500" width="14" height="14" fill="#f0f0f0" stroke="#111" stroke-dasharray="2 1.500"/><g transform="translate(0.500,0.500)"><path d="M2.500 8.500v-2a4.500 4.500 0 0 1 9 0v2" fill="none" stroke="#3d464d" stroke-width="1.100"/><path d="M1.800 6.500h1.600v3h-1.600zM10.600 6.500h1.600v3h-1.600z" fill="#3d464d"/><path d="M2.500 9.500c0 1.500 1 2.200 3.500 2.200" fill="none" stroke="#3d464d" stroke-width="0.900"/></g></svg><svg class="a" style="left:917px;top:637px" width="15" height="15" viewBox="0 0 15 15"><rect x="0.500" y="0.500" width="14" height="14" fill="#f0f0f0" stroke="#111" stroke-dasharray="2 1.500"/></svg><svg class="a" style="left:902px;top:657px" width="15" height="15" viewBox="0 0 15 15"><rect x="0.500" y="0.500" width="14" height="14" rx="1" fill="#f0f0f0" stroke="#111"/></svg><svg class="a" style="left:921px;top:580px" width="10" height="9" viewBox="0 0 10 9"><path d="M1.500 1.500h7l-3.500 6.500z" fill="#f0f0f0"/></svg><svg class="a" style="left:921px;top:660px" width="10" height="9" viewBox="0 0 10 9"><path d="M1.500 1.500h7l-3.500 6.500z" fill="#f0f0f0"/></svg><div class="t" style="left:936px;top:578px;color:#f2f2f2;letter-spacing:0.12px">artwork</div><div class="t" style="left:935px;top:598px;color:#333;letter-spacing:-0.24px">[77 points]</div><div class="t" style="left:935px;top:618px;color:#333;letter-spacing:-0.24px">[69 points]</div><div class="t" style="left:935px;top:638px;color:#333;letter-spacing:-0.34px">Border</div><div class="t" style="left:936px;top:658px;color:#f2f2f2;letter-spacing:-0.70px;word-spacing:-0.5px">Layer 1</div><div class="a" style="left:1121px;top:578px;width:12px;height:12px;background:#8b0000"></div><div class="a" style="left:1121px;top:658px;width:12px;height:12px;border:1px solid #5c5c5c"></div>
<svg class="a" style="left:896px;top:884px" width="24" height="16" viewBox="0 0 24 16"><g transform="translate(8,8)"><g fill="#d8d8d8"><rect x="-1.300" y="-6.500" width="2.600" height="13"/><rect x="-1.300" y="-6.500" width="2.600" height="13" transform="rotate(45)"/><rect x="-1.300" y="-6.500" width="2.600" height="13" transform="rotate(90)"/><rect x="-1.300" y="-6.500" width="2.600" height="13" transform="rotate(135)"/><circle r="4.600"/></g><circle r="2.100" fill="#555"/></g><path d="M17 7h5l-2.500 3z" fill="#d0d0d0"/></svg>
<svg class="a" style="left:1145px;top:884px" width="40" height="16" viewBox="1145 884 40 16"><path d="M1146.500 885.500h11v13h-11z" fill="#e4e4e4" stroke="#8a8a8a"/><path d="M1149 890l7 0 0 7z" fill="#777"/><path d="M1166.500 886h12v2h-12zM1170 884.500h5v1.500h-5zM1167.500 888.500h10l-0.800 10h-8.400z" fill="#e8e8e8" stroke="#3a3a3a" stroke-width="0.600"/><path d="M1170.500 890v7M1172.500 890v7M1174.500 890v7" stroke="#8a8a8a" stroke-width="0.900"/></svg>


<!-- bottom bar -->
<svg class="a" style="left:14px;top:910px" width="24" height="16" viewBox="0 0 24 16"><g transform="translate(8,8)"><g fill="#e0e0e0"><rect x="-1.300" y="-6.800" width="2.600" height="13.600"/><rect x="-1.300" y="-6.800" width="2.600" height="13.600" transform="rotate(45)"/><rect x="-1.300" y="-6.800" width="2.600" height="13.600" transform="rotate(90)"/><rect x="-1.300" y="-6.800" width="2.600" height="13.600" transform="rotate(135)"/><circle r="4.800"/></g><circle r="2.200" fill="#444"/></g><path d="M17 7h5l-2.500 3z" fill="#d0d0d0"/></svg>
<svg class="a" style="left:42px;top:909px" width="19" height="19" viewBox="0 0 19 19" shape-rendering="crispEdges"><rect x="0" y="0" width="19" height="19" fill="#000"/><g stroke="#fff" stroke-width="1" stroke-dasharray="1 1"><path d="M4 2.500h4M11 2.500h4M4 16.500h4M11 16.500h4M2.500 4v4M2.500 11v4M16.500 4v4M16.500 11v4"/></g><g fill="#fff"><rect x="1" y="1" width="3" height="3"/><rect x="8" y="1" width="3" height="3"/><rect x="15" y="1" width="3" height="3"/><rect x="1" y="8" width="3" height="3"/><rect x="15" y="8" width="3" height="3"/><rect x="1" y="15" width="3" height="3"/><rect x="8" y="15" width="3" height="3"/><rect x="15" y="15" width="3" height="3"/></g><rect x="6" y="6" width="7" height="7" fill="#262626"/><rect x="7" y="7" width="5" height="5" fill="#000"/></svg>
<div class="t" style="left:78px;top:912px;color:#e8e8e8">X</div>
<div class="t" style="left:153px;top:912px;color:#e8e8e8">Y</div>
<div class="t" style="left:239px;top:912px;color:#e8e8e8">W</div>
<div class="t" style="left:338px;top:912px;color:#e8e8e8">H</div>
<svg class="a" style="left:319px;top:913px" width="14" height="10" viewBox="0 0 14 10"><g fill="none" stroke="#e0e0e0" stroke-width="1.700"><rect x="1.200" y="1.600" width="7.400" height="3.800" rx="1.900"/><rect x="5.400" y="3.800" width="7.400" height="3.800" rx="1.900"/></g></svg>
<svg class="a" style="left:429px;top:911px" width="13" height="13" viewBox="0 0 13 13"><path d="M3.500 3.500a4 4 0 1 1-0.500 5" fill="none" stroke="#e6e6e6" stroke-width="1.600"/><path d="M1 1.500l0.500 5 4.500-1.500z" fill="#e6e6e6"/></svg>
<svg class="a" style="left:511px;top:912px" width="13" height="11" viewBox="0 0 13 11"><path d="M4.500 1h8l-4 9h-8z" fill="#e6e6e6"/></svg>
<div class="a" style="left:89px;top:908px;width:60px;height:20px;background:#333333;border-radius:5px"></div><div class="t" style="left:93px;top:912px;color:#f0f0f0;letter-spacing:-0.30px">8 px</div>
<div class="a" style="left:164px;top:908px;width:60px;height:20px;background:#333333;border-radius:5px"></div><div class="t" style="left:168px;top:912px;color:#f0f0f0;letter-spacing:-0.30px">8 px</div>
<div class="a" style="left:255px;top:908px;width:60px;height:20px;background:#333333;border-radius:5px"></div><div class="t" style="left:259px;top:912px;color:#f0f0f0;letter-spacing:-0.47px">16 px</div>
<div class="a" style="left:352px;top:908px;width:60px;height:20px;background:#333333;border-radius:5px"></div><div class="t" style="left:356px;top:912px;color:#f0f0f0;letter-spacing:-0.47px">16 px</div>
<div class="a" style="left:446px;top:908px;width:60px;height:20px;background:#333333;border-radius:5px"></div><div class="t" style="left:450px;top:912px;color:#f0f0f0;letter-spacing:-0.37px">0.0°</div>
<div class="a" style="left:529px;top:908px;width:60px;height:20px;background:#333333;border-radius:5px"></div><div class="t" style="left:533px;top:912px;color:#f0f0f0;letter-spacing:-0.37px">0.0°</div>
<div class="a" style="left:609px;top:909px;width:52px;height:19px;background:#5a5a5a;border-radius:4px;border:1px solid #363636"></div><div class="t" style="left:629px;top:912px;color:#f0f0f0;letter-spacing:-0.02px">Align</div><div class="a" style="left:662px;top:909px;width:15px;height:19px;background:#7c7c7c;border-radius:3px;border:1px solid #8e8e8e"></div><svg class="a" style="left:665px;top:915px" width="9" height="7" viewBox="0 0 9 7"><path d="M1.500 1.500l3 3 3-3" fill="none" stroke="#fff" stroke-width="1.600"/></svg><svg class="a" style="left:613px;top:912px" width="12" height="12" viewBox="0 0 12 12"><rect x="3" y="3" width="6" height="6" fill="#e6e6e6"/><path d="M6 0v2M6 10v2M0 6h2M10 6h2" stroke="#e6e6e6" stroke-width="1.200"/></svg>
<div class="a" style="left:681px;top:909px;width:77px;height:19px;background:#5a5a5a;border-radius:4px;border:1px solid #363636"></div><div class="t" style="left:702px;top:912px;color:#f0f0f0;letter-spacing:-0.07px">Distribute</div><div class="a" style="left:760px;top:909px;width:15px;height:19px;background:#7c7c7c;border-radius:3px;border:1px solid #8e8e8e"></div><svg class="a" style="left:763px;top:915px" width="9" height="7" viewBox="0 0 9 7"><path d="M1.500 1.500l3 3 3-3" fill="none" stroke="#fff" stroke-width="1.600"/></svg><svg class="a" style="left:686px;top:912px" width="12" height="12" viewBox="0 0 12 12"><path d="M0 1h12M0 11h12" stroke="#e6e6e6" stroke-width="1.300"/><rect x="2" y="3" width="8" height="2.200" fill="#e6e6e6"/><rect x="3.500" y="6.800" width="5" height="2.200" fill="#e6e6e6"/></svg>
<div class="a" style="left:778px;top:909px;width:52px;height:19px;background:#5a5a5a;border-radius:4px;border:1px solid #363636"></div><div class="t" style="left:800px;top:912px;color:#f0f0f0;letter-spacing:-0.70px">Stack</div><div class="a" style="left:832px;top:909px;width:15px;height:19px;background:#7c7c7c;border-radius:3px;border:1px solid #8e8e8e"></div><svg class="a" style="left:835px;top:915px" width="9" height="7" viewBox="0 0 9 7"><path d="M1.500 1.500l3 3 3-3" fill="none" stroke="#fff" stroke-width="1.600"/></svg><svg class="a" style="left:783px;top:912px" width="12" height="12" viewBox="0 0 12 12"><path d="M6 0l3 3h-6z" fill="#e6e6e6"/><rect x="2" y="4.500" width="8" height="2.200" fill="#e6e6e6"/><rect x="2" y="8.300" width="8" height="2.200" fill="none" stroke="#e6e6e6" stroke-width="1"/></svg>
<div class="a" style="left:851px;top:909px;width:50px;height:19px;background:#5a5a5a;border-radius:4px;border:1px solid #363636"></div><div class="t" style="left:873px;top:912px;color:#f0f0f0;letter-spacing:-0.42px">Path</div><div class="a" style="left:903px;top:909px;width:15px;height:19px;background:#7c7c7c;border-radius:3px;border:1px solid #8e8e8e"></div><svg class="a" style="left:906px;top:915px" width="9" height="7" viewBox="0 0 9 7"><path d="M1.500 1.500l3 3 3-3" fill="none" stroke="#fff" stroke-width="1.600"/></svg><svg class="a" style="left:856px;top:912px" width="13" height="13" viewBox="0 0 13 13"><rect x="1" y="1" width="7.500" height="7.500" fill="none" stroke="#e6e6e6" stroke-width="1.300"/><rect x="4.500" y="4.500" width="7.500" height="7.500" fill="#5a5a5a" stroke="#e6e6e6" stroke-width="1.300"/></svg>


<!-- object menu -->
<div class="a" style="left:160px;top:51px;width:245px;height:309px;background:#3a3a3a;border:1px solid #5a5a5a;border-top-color:#3a3a3a;box-shadow:2px 2px 3px rgba(0,0,0,.45)"></div>
<div class="a" style="left:164px;top:273px;width:240px;height:17px;background:#a3a3a3"></div>
<div class="a" style="left:166px;top:106px;width:232px;height:1px;background:#545454"></div>
<div class="a" style="left:166px;top:230px;width:232px;height:1px;background:#545454"></div>
<div class="a" style="left:166px;top:269px;width:232px;height:1px;background:#545454"></div>
<div class="t" style="left:180px;top:55px;color:#6f6f6f;letter-spacing:-0.23px">Convert Object to Path</div><div class="t" style="left:321px;top:55px;color:#6f6f6f;letter-spacing:0.01px">Ctrl+Shift+O</div>
<div class="t" style="left:180px;top:72px;color:#6f6f6f;letter-spacing:-0.28px">Convert Stroke to Path</div>
<div class="t" style="left:180px;top:89px;color:#ececec;letter-spacing:-0.74px">Reverse Path</div><div class="t" style="left:321px;top:89px;color:#ececec;letter-spacing:-0.26px">Ctrl+R</div>
<div class="t" style="left:180px;top:111px;color:#ececec;letter-spacing:-0.40px">Stroke</div><svg class="a" style="left:391px;top:113px" width="6" height="9" viewBox="0 0 6 9"><path d="M0.500 0.500l4.500 4-4.500 4z" fill="#ececec"/></svg>
<div class="t" style="left:180px;top:128px;color:#ececec;letter-spacing:-0.63px">Image</div><svg class="a" style="left:391px;top:130px" width="6" height="9" viewBox="0 0 6 9"><path d="M0.500 0.500l4.500 4-4.500 4z" fill="#ececec"/></svg>
<div class="t" style="left:180px;top:145px;color:#6f6f6f;letter-spacing:-0.41px">Join Path</div><div class="t" style="left:321px;top:145px;color:#6f6f6f;letter-spacing:-0.46px">Ctrl+J</div>
<div class="t" style="left:180px;top:162px;color:#6f6f6f;letter-spacing:-0.55px">Close Path</div><div class="t" style="left:321px;top:162px;color:#6f6f6f;letter-spacing:-0.30px">Alt+J</div>
<div class="t" style="left:180px;top:179px;color:#ececec;letter-spacing:-0.38px">Blend Paths...</div>
<div class="t" style="left:180px;top:196px;color:#ececec;letter-spacing:-0.35px">Simplify Path...</div>
<div class="t" style="left:180px;top:213px;color:#ececec;letter-spacing:-0.34px">Text on Path</div><svg class="a" style="left:391px;top:215px" width="6" height="9" viewBox="0 0 6 9"><path d="M0.500 0.500l4.500 4-4.500 4z" fill="#ececec"/></svg>
<div class="t" style="left:180px;top:235px;color:#ececec;letter-spacing:-0.37px">Create Slice from Selection</div><div class="t" style="left:321px;top:235px;color:#ececec;letter-spacing:-0.08px">Ctrl+Shift+K</div>
<div class="t" style="left:180px;top:252px;color:#6f6f6f;letter-spacing:-0.20px">Fit Slice to Content</div>
<div class="t" style="left:180px;top:274px;color:#2a2a2a;letter-spacing:-0.26px">Compound Path</div><svg class="a" style="left:391px;top:276px" width="6" height="9" viewBox="0 0 6 9"><path d="M0.500 0.500l4.500 4-4.500 4z" fill="#2a2a2a"/></svg>
<div class="t" style="left:180px;top:291px;color:#ececec;letter-spacing:-0.15px">Clipping Path</div><svg class="a" style="left:391px;top:293px" width="6" height="9" viewBox="0 0 6 9"><path d="M0.500 0.500l4.500 4-4.500 4z" fill="#ececec"/></svg>
<div class="t" style="left:180px;top:308px;color:#ececec;letter-spacing:-0.22px">Path Operations</div><svg class="a" style="left:391px;top:310px" width="6" height="9" viewBox="0 0 6 9"><path d="M0.500 0.500l4.500 4-4.500 4z" fill="#ececec"/></svg>
<div class="t" style="left:180px;top:325px;color:#ececec;letter-spacing:-0.37px">Guide</div><svg class="a" style="left:391px;top:327px" width="6" height="9" viewBox="0 0 6 9"><path d="M0.500 0.500l4.500 4-4.500 4z" fill="#ececec"/></svg>
<div class="t" style="left:180px;top:342px;color:#ececec;letter-spacing:-0.21px">Envelope Distort</div><svg class="a" style="left:391px;top:344px" width="6" height="9" viewBox="0 0 6 9"><path d="M0.500 0.500l4.500 4-4.500 4z" fill="#ececec"/></svg>

<div class="a" style="left:405px;top:272px;width:143px;height:38px;background:#3a3a3a;border:1px solid #5a5a5a;box-shadow:2px 2px 3px rgba(0,0,0,.45)"></div>
<div class="a" style="left:407px;top:274px;width:138px;height:17px;background:#a3a3a3"></div>
<div class="t" style="left:423px;top:276px;color:#2a2a2a;letter-spacing:-0.69px">Make</div><div class="t" style="left:467px;top:276px;color:#2a2a2a;letter-spacing:-0.21px">Ctrl+8</div>
<div class="t" style="left:423px;top:293px;color:#ececec;letter-spacing:-0.85px">Release</div><div class="t" style="left:467px;top:293px;color:#ececec;letter-spacing:-0.01px">Ctrl+Shift+8</div>

</body></html>
